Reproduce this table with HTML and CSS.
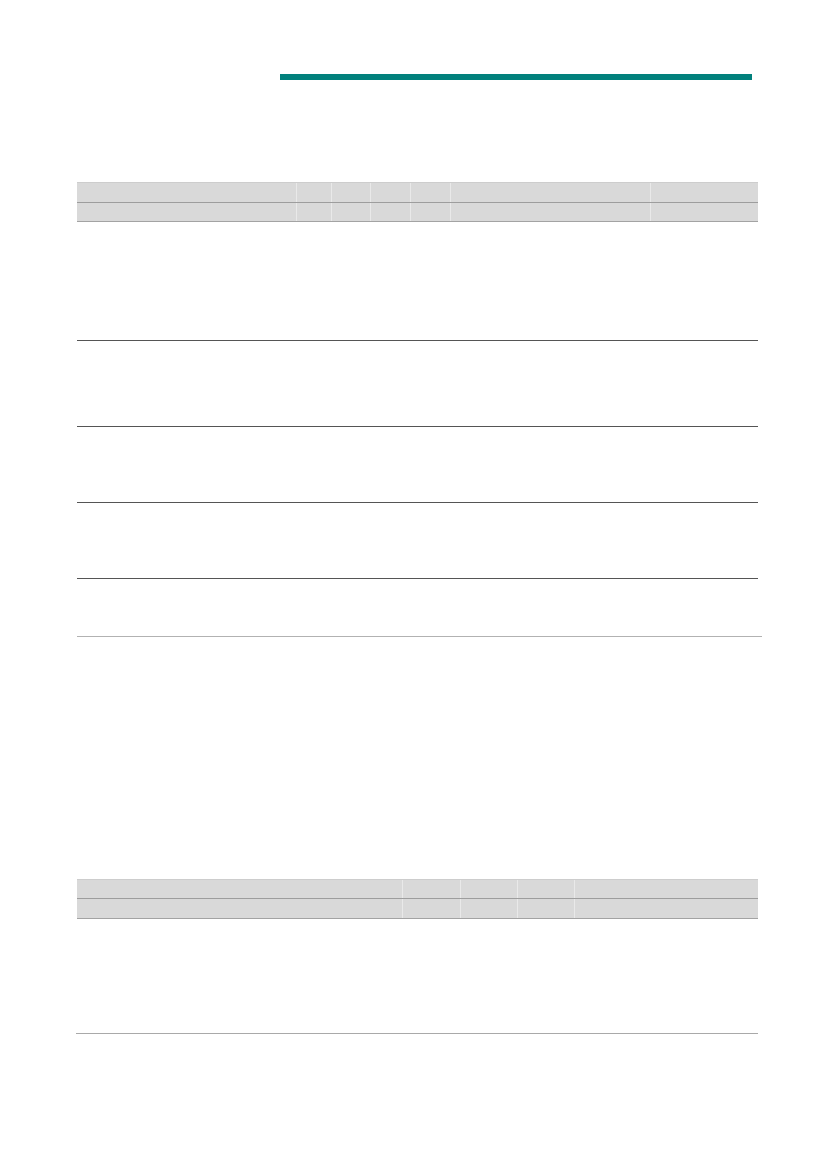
FILE: index.html
```html
<!DOCTYPE html>
<html lang="en">
<head>
<meta charset="utf-8">
<title>Document</title>
<link rel="stylesheet" href="styles.css">
</head>
<body>
<div class="page">
  <div class="rule"></div>

  <section class="table table-one">
    <div class="thead">
      <div class="hrow">
        <div class="hcell"></div><div class="hcell"></div><div class="hcell"></div><div class="hcell"></div><div class="hcell"></div><div class="hcell"></div><div class="hcell"></div>
      </div>
      <div class="hrow hrow-last">
        <div class="hcell"></div><div class="hcell"></div><div class="hcell"></div><div class="hcell"></div><div class="hcell"></div><div class="hcell"></div><div class="hcell"></div>
      </div>
    </div>
    <div class="brow r1"></div>
    <div class="brow r2"></div>
    <div class="brow r3"></div>
    <div class="brow r4"></div>
    <div class="brow r5 brow-end"></div>
  </section>

  <section class="table table-two">
    <div class="thead">
      <div class="hrow">
        <div class="hcell"></div><div class="hcell"></div><div class="hcell"></div><div class="hcell"></div><div class="hcell"></div>
      </div>
      <div class="hrow hrow-last">
        <div class="hcell"></div><div class="hcell"></div><div class="hcell"></div><div class="hcell"></div><div class="hcell"></div>
      </div>
    </div>
    <div class="brow t2r1 brow-end2"></div>
  </section>
</div>
</body>
</html>
```

FILE: styles.css
```css
html, body {
  margin: 0;
  padding: 0;
  background: #ffffff;
  font-family: "Liberation Sans", Arial, sans-serif;
}

.page {
  width: 681px;
  padding: 74px 0 0 77px;
}

.rule {
  margin-left: 203px;
  width: 472px;
  height: 6px;
  background: #01807c;
}

.table-one {
  margin-top: 102px;
}

.thead {
  background: #d9d9d9;
  border-top: 1px solid #cdcdcd;
}

.hrow {
  display: grid;
  border-bottom: 1px solid #9d9d9d;
}

.table-one .hrow {
  grid-template-columns: 219px 35px 39px 40px 40px 200px 108px;
}

.table-one .hrow:first-child {
  height: 19px;
}

.table-one .hrow-last {
  height: 18px;
}

.table-two .hrow {
  grid-template-columns: 325px 58px 57px 57px 184px;
  height: 18px;
}

.table-two .hrow-last {
  height: 19px;
}

.hrow-last {
  border-bottom-color: #a3a3a3;
}

.hcell + .hcell {
  border-left: 1px solid #e9e9e9;
}

.brow {
  border-bottom: 1px solid #555555;
}

.r1 { height: 118px; }
.r2 { height: 85px; }
.r3 { height: 75px; }
.r4 { height: 75px; }

.r5 {
  height: 57px;
}

.brow-end {
  margin-right: -4px;
  border-bottom: 1px solid #b2b2b2;
}

.table-two {
  margin-top: 242px;
}

.t2r1 {
  height: 114px;
}

.brow-end2 {
  margin-left: -1px;
  border-bottom: 1px solid #a9a9a9;
}
```
